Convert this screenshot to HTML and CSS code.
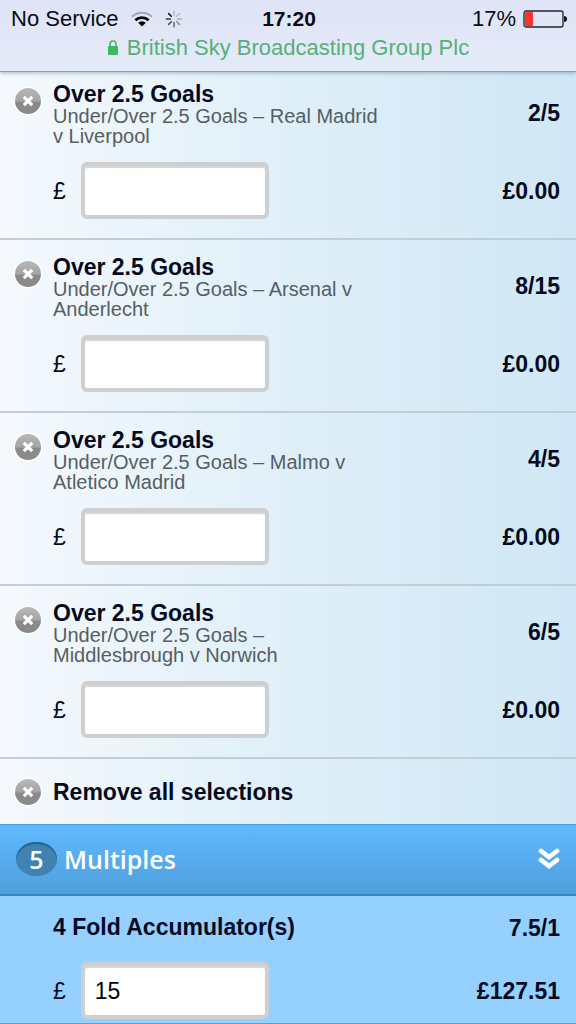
FILE: index.html
```html
<!DOCTYPE html>
<html lang="en">
  <head>
    <meta charset="UTF-8" />
    <meta name="viewport" content="width=device-width, initial-scale=1.0" />
    <title>Bet slip</title>
    <link rel="stylesheet" href="styles.css">
  </head>
  <body>
    <svg class="defs" aria-hidden="true">
      <defs>
        <linearGradient id="grey" x1="0" y1="0" x2="0" y2="1">
          <stop offset="0" stop-color="#b8b8b8" />
          <stop offset="0.5" stop-color="#a4a4a4" />
          <stop offset="0.55" stop-color="#8a8a8a" />
          <stop offset="1" stop-color="#8a8a8a" />
        </linearGradient>
        <symbol id="cross" viewBox="0 0 30 30">
          <circle cx="15" cy="15" r="14.5" fill="#fff" opacity="0.8" />
          <circle cx="15" cy="15" r="13" fill="url(#grey)" />
          <path d="M10.8 10.8l8.4 8.4M19.2 10.8l-8.4 8.4" stroke="#fff" stroke-width="3.2" />
        </symbol>
      </defs>
    </svg>

    <header class="header">
      <div class="status">
        <div class="status-left">
          <span>No Service</span>
          <svg class="wifi" viewBox="0 0 22 16">
            <g fill="none">
              <path d="M1 5.8a14.4 14.4 0 0 1 20 0" stroke="#a3a8b6" stroke-width="2.2" />
              <path d="M4.4 9.3a9.6 9.6 0 0 1 13.2 0" stroke="#000" stroke-width="2.8" />
            </g>
            <path d="M11 15.6l-3.8-3.9a5.4 5.4 0 0 1 7.6 0z" />
          </svg>
          <svg class="spinner" viewBox="0 0 20 20" stroke-width="1.8" stroke-linecap="round">
            <path d="M10 6V1.500" stroke="#b9bdcb" />
            <path d="M13 7l3-3" stroke="#b9bdcb" />
            <path d="M14 10h4.500" stroke="#a8acb8" />
            <path d="M13 13l3 3" stroke="#8e929e" />
            <path d="M10 14v4.500" stroke="#6d707a" />
            <path d="M7 13l-3 3" stroke="#50525a" />
            <path d="M6 10H1.500" stroke="#33353b" />
            <path d="M7 7L4 4" stroke="#17181c" />
          </svg>
        </div>
        <b class="clock">17:20</b>
        <div class="status-right">
          <span>17%</span>
          <svg class="battery" viewBox="0 0 44 18">
            <rect x="1" y="1" width="39" height="16" rx="2" fill="none" stroke="#23242c" stroke-width="1.3" />
            <rect x="2" y="2" width="8" height="14" rx="1" fill="#f8342c" />
            <path d="M41 6q3 0 3 3t-3 3z" fill="#111" />
          </svg>
        </div>
      </div>
      <div class="site">
        <svg class="lock" viewBox="0 0 12 16">
          <rect x="1" y="6" width="10" height="9" rx="1" fill="#3fb75f" />
          <path d="M3 7V4a3 3 0 0 1 6 0v3" fill="none" stroke="#3fb75f" stroke-width="1.5" />
        </svg>
        <span>British Sky Broadcasting Group Plc</span>
      </div>
    </header>

    <main>
      <section class="selections">
        <div class="bet">
          <button class="remove" aria-label="Remove"><svg><use href="#cross" /></svg></button>
          <div class="info">
            <h2>Over 2.5 Goals</h2>
            <p>Under/Over 2.5 Goals – Real Madrid v Liverpool</p>
          </div>
          <span class="odds">2/5</span>
          <div class="stake">
            <label for="stake1">£</label>
            <input id="stake1" type="text" inputmode="decimal">
          </div>
          <span class="returns">£0.00</span>
        </div>
        <div class="bet">
          <button class="remove" aria-label="Remove"><svg><use href="#cross" /></svg></button>
          <div class="info">
            <h2>Over 2.5 Goals</h2>
            <p>Under/Over 2.5 Goals – Arsenal v Anderlecht</p>
          </div>
          <span class="odds">8/15</span>
          <div class="stake">
            <label for="stake2">£</label>
            <input id="stake2" type="text" inputmode="decimal">
          </div>
          <span class="returns">£0.00</span>
        </div>
        <div class="bet">
          <button class="remove" aria-label="Remove"><svg><use href="#cross" /></svg></button>
          <div class="info">
            <h2>Over 2.5 Goals</h2>
            <p>Under/Over 2.5 Goals – Malmo v Atletico Madrid</p>
          </div>
          <span class="odds">4/5</span>
          <div class="stake">
            <label for="stake3">£</label>
            <input id="stake3" type="text" inputmode="decimal">
          </div>
          <span class="returns">£0.00</span>
        </div>
        <div class="bet">
          <button class="remove" aria-label="Remove"><svg><use href="#cross" /></svg></button>
          <div class="info">
            <h2>Over 2.5 Goals</h2>
            <p>Under/Over 2.5 Goals – Middlesbrough v Norwich</p>
          </div>
          <span class="odds">6/5</span>
          <div class="stake">
            <label for="stake4">£</label>
            <input id="stake4" type="text" inputmode="decimal">
          </div>
          <span class="returns">£0.00</span>
        </div>
        <button class="remove-all">
          <svg><use href="#cross" /></svg>
          <span>Remove all selections</span>
        </button>
      </section>

      <section class="multiples">
        <button class="multiples-head">
          <span class="count">5</span>
          <span>Multiples</span>
          <svg class="chevrons" viewBox="0 0 22 22">
            <path d="M3 3l8 6 8-6M3 12l8 6 8-6" fill="none" stroke="#fff" stroke-width="4.6" stroke-linecap="round" />
          </svg>
        </button>
        <div class="bet">
          <div class="info">
            <h2>4 Fold Accumulator(s)</h2>
          </div>
          <span class="odds">7.5/1</span>
          <div class="stake">
            <label for="stake5">£</label>
            <input id="stake5" type="text" inputmode="decimal" value="15">
          </div>
          <span class="returns">£127.51</span>
        </div>
      </section>
    </main>
  </body>
</html>
```
FILE: styles.css
```css
* {
  margin: 0;
  padding: 0;
  box-sizing: border-box;
}

body {
  font-family: "Liberation Sans", Arial, sans-serif;
  font-size: 23px;
  line-height: 24px;
  color: #050a1e;
  background: #95d0fe;
}

button {
  border: 0;
  background: none;
  font: inherit;
  color: inherit;
  text-align: left;
  cursor: pointer;
}

svg {
  display: block;
  flex: none;
}

.defs {
  position: absolute;
  width: 0;
  height: 0;
}

/* status bar */
.header {
  position: relative;
  z-index: 1;
  height: 72px;
  padding-top: 7px;
  background: linear-gradient(#dfe4f6, #e4ebf8);
  border-bottom: 1px solid #8ba0b0;
  box-shadow: 0 1px 4px rgba(90, 120, 140, 0.5);
  font-size: 22px;
}

.status {
  display: grid;
  grid-template-columns: 1fr auto 1fr;
  align-items: center;
  padding: 0 9px 0 11px;
  color: #0b0c14;
}

.status-left,
.status-right {
  display: flex;
  align-items: center;
}

.status-left {
  gap: 12px;
}

.status-right {
  justify-content: flex-end;
  gap: 7px;
}

.clock {
  font-size: 21px;
}

.wifi {
  width: 22px;
  height: 16px;
}

.spinner {
  width: 18px;
  height: 18px;
}

.battery {
  width: 44px;
  height: 18px;
}

.site {
  display: flex;
  align-items: center;
  justify-content: center;
  gap: 8px;
  margin-top: 5px;
  color: #56b077;
}

.lock {
  width: 12px;
  height: 16px;
}

/* selections */
.selections {
  background: linear-gradient(to right, #f5f9fd, #e1f0f9 45%, #d0e7f5);
}

.bet {
  display: grid;
  grid-template-columns: 37px 1fr auto;
  row-gap: 16px;
  padding: 16px 16px 19px;
  border-bottom: 2px solid #bfced9;
}

.selections .bet:first-child {
  padding-top: 11px;
}

.remove {
  grid-column: 1;
  width: 30px;
  height: 30px;
  margin: 3px 0 0 -3px;
}

.remove svg,
.remove-all svg {
  width: 30px;
  height: 30px;
}

.info {
  grid-column: 2;
  max-width: 332px;
}

.info h2 {
  font-size: 23px;
  line-height: 23px;
}

.info p {
  font-size: 20px;
  line-height: 20px;
  color: #555e64;
}

.odds,
.returns {
  grid-column: 3;
  align-self: center;
  text-align: right;
  font-weight: bold;
}

.selections .odds {
  padding-bottom: 3px;
}

.stake {
  grid-column: 2;
  display: flex;
  align-items: center;
  gap: 15px;
}

.stake input {
  width: 188px;
  height: 57px;
  padding: 2px 10px 0;
  border: 4px solid #cdcfd1;
  border-radius: 6px;
  background: #fff;
  box-shadow: inset 0 2px 1px #d4d4d4;
  font: inherit;
  color: #000;
}

.remove-all {
  display: flex;
  align-items: center;
  gap: 10px;
  width: 100%;
  height: 65px;
  padding: 0 13px;
  font-weight: bold;
}

/* multiples */
.multiples-head {
  display: flex;
  align-items: center;
  gap: 7px;
  width: 100%;
  height: 72px;
  padding: 0 16px 2px;
  border-top: 1px solid #4c9fda;
  border-bottom: 2px solid #3986bf;
  background: linear-gradient(#60b9ff, #4f9fdc);
  font-family: "Open Sans", "Noto Sans", sans-serif;
  font-size: 25px;
  font-weight: 600;
  color: #fff;
}

.count {
  width: 41px;
  height: 34px;
  border-radius: 20px / 17px;
  background: #4282b2;
  box-shadow: inset 0 2px 1px #21648f;
  line-height: 34px;
  text-align: center;
}

.chevrons {
  width: 22px;
  height: 22px;
  margin-left: auto;
}

.multiples .bet {
  row-gap: 22px;
  padding: 20px 16px 4px;
  border-bottom: 1px solid #579fcf;
}
```
